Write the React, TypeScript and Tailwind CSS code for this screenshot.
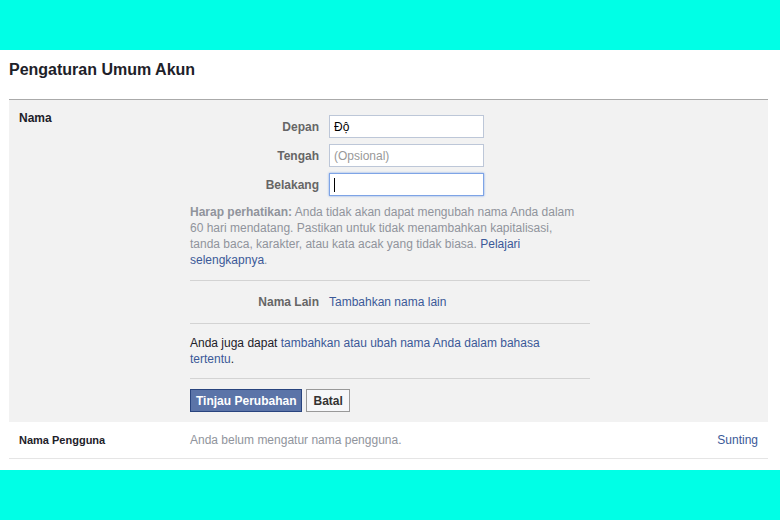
export default function App() {
  return (
    <div className="w-[780px] h-[520px] bg-[#00ffe6] flex flex-col font-['Liberation_Sans',Arial,sans-serif] text-[12px] text-[#333]">
      <div className="h-[50px]" />
      <div className="bg-white h-[420px] px-[9px] pr-[12px]">
        <div className="h-[49px] pt-[8px]">
          <h1 className="text-[16px] leading-[24px] font-bold text-[#1d2129]">Pengaturan Umum Akun</h1>
        </div>

        {/* Nama panel */}
        <div className="border-t border-[#aaa] bg-[#f2f2f2] flex pb-[10px]">
          <div className="w-[181px] pl-[10px] pt-[9px] font-bold text-[#1d2129]">Nama</div>
          <div className="w-[400px] pt-[15px]">
            <div className="flex flex-col gap-[6px]">
              <div className="flex items-center">
                <label className="w-[139px] pr-[10px] text-right font-bold text-[#666]">Depan</label>
                <input
                  defaultValue="Độ"
                  className="w-[155px] h-[23px] bg-white border border-[#bdc7d8] px-[4px] text-[12px] text-black outline-none"
                />
              </div>
              <div className="flex items-center">
                <label className="w-[139px] pr-[10px] text-right font-bold text-[#666]">Tengah</label>
                <input
                  placeholder="(Opsional)"
                  className="w-[155px] h-[23px] bg-white border border-[#bdc7d8] px-[4px] text-[12px] placeholder:text-[#999] outline-none"
                />
              </div>
              <div className="flex items-center">
                <label className="w-[139px] pr-[10px] text-right font-bold text-[#666]">Belakang</label>
                <div className="w-[155px] h-[23px] bg-white border border-[#7ea4e6] shadow-[0_0_2px_#7ea4e6] px-[4px] flex items-center">
                  <span className="w-px h-[14px] bg-black" />
                </div>
              </div>
            </div>

            <p className="mt-[8px] leading-[16px] text-[#90949c] pr-[8px]">
              <b className="text-[#90949c]">Harap perhatikan:</b> Anda tidak akan dapat mengubah nama Anda dalam 60 hari mendatang. Pastikan untuk tidak menambahkan kapitalisasi, tanda baca, karakter, atau kata acak yang tidak biasa.{" "}
              <span className="text-[#3b5998]">Pelajari selengkapnya</span>.
            </p>

            <div className="mt-[12px] border-t border-[#d3d3d3]" />
            <div className="h-[42px] flex items-center">
              <span className="w-[139px] pr-[10px] text-right font-bold text-[#666]">Nama Lain</span>
              <span className="text-[#3b5998]">Tambahkan nama lain</span>
            </div>
            <div className="border-t border-[#d3d3d3]" />

            <p className="mt-[11px] leading-[16px] text-[#1d2129] pr-[30px]">
              Anda juga dapat <span className="text-[#3b5998]">tambahkan atau ubah nama Anda dalam bahasa tertentu</span>.
            </p>

            <div className="mt-[11px] border-t border-[#d3d3d3]" />
            <div className="mt-[10px] flex gap-[4px]">
              <button className="h-[23px] px-[5px] bg-[#5b74a8] border border-[#29447e] text-white font-bold text-[12px]">
                Tinjau Perubahan
              </button>
              <button className="h-[23px] px-[6px] bg-[#f6f7f9] border border-[#999] text-[#333] font-bold text-[12px]">
                Batal
              </button>
            </div>
          </div>
        </div>

        {/* Nama Pengguna row */}
        <div className="h-[37px] flex items-center border-b border-[#e5e5e5]">
          <div className="w-[181px] pl-[10px] font-bold text-[11px] text-[#1d2129]">Nama Pengguna</div>
          <div className="flex-1 text-[#90949c]">Anda belum mengatur nama pengguna.</div>
          <div className="pr-[10px] text-[#3b5998]">Sunting</div>
        </div>
      </div>
    </div>
  );
}
